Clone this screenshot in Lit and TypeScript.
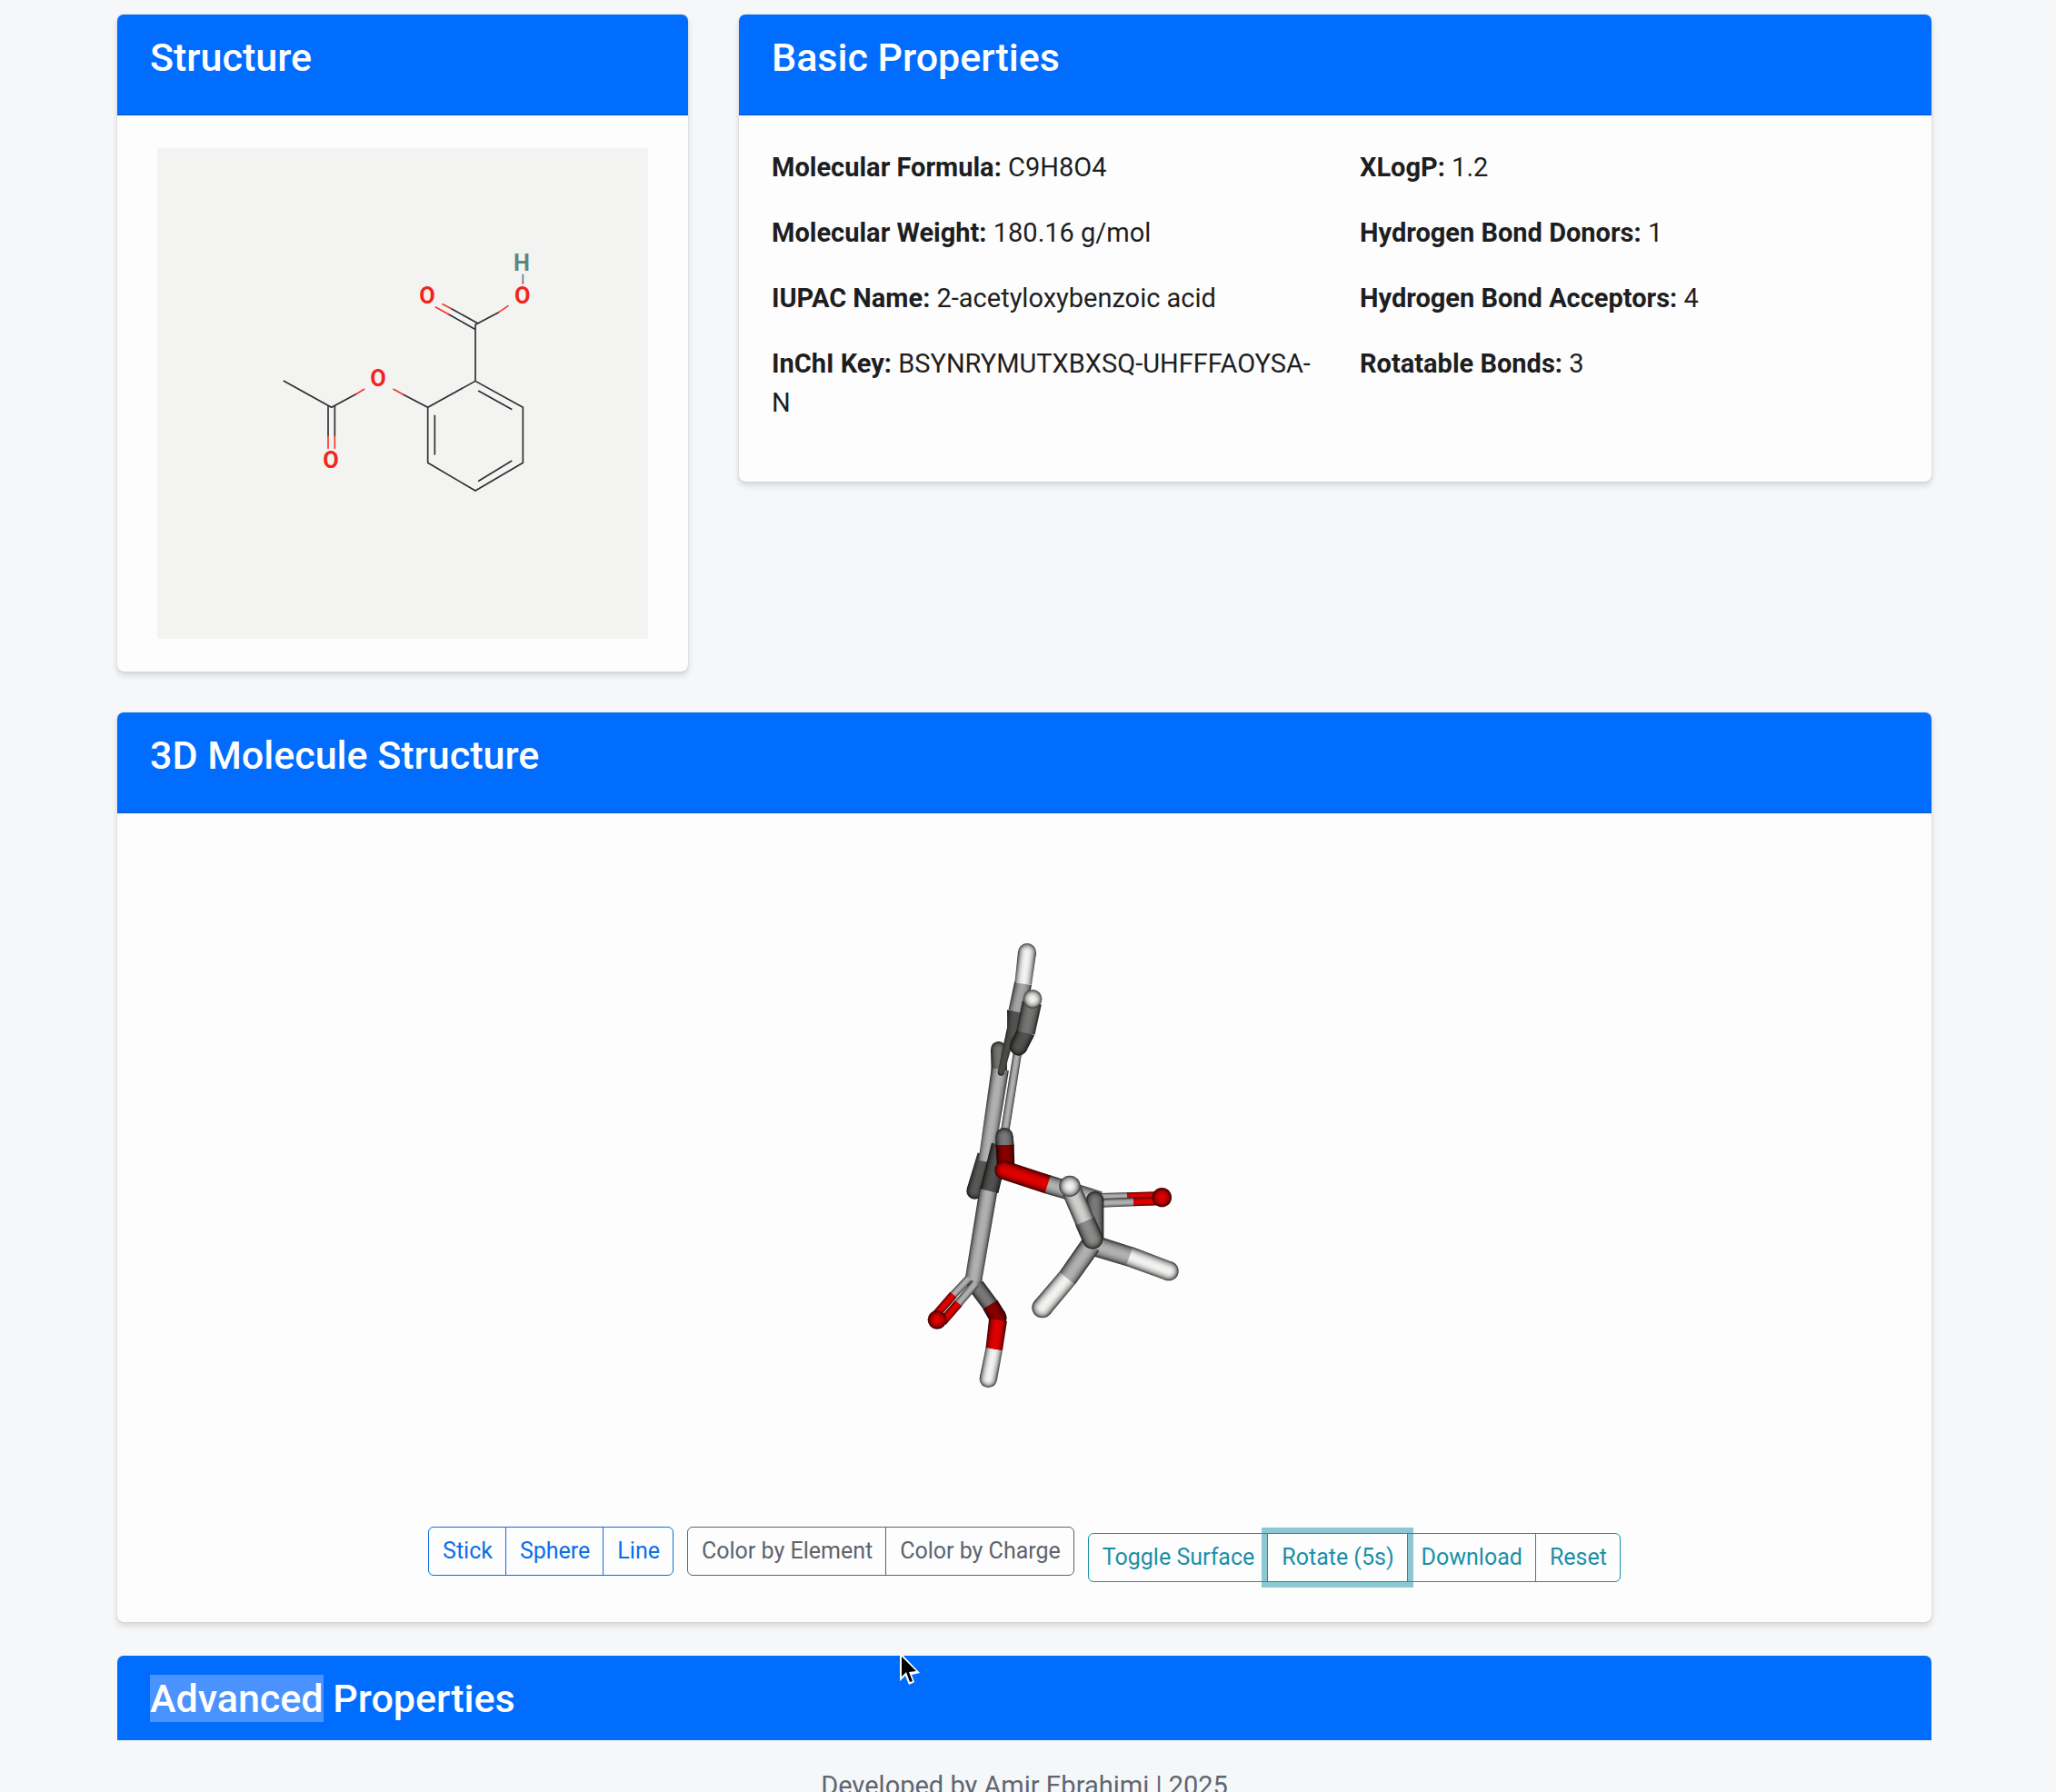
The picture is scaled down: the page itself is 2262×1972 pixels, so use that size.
import { LitElement, html, svg, css } from "lit";
import { customElement } from "lit/decorators.js";

type Rgb = [number, number, number];
type Stick = {
  from: [number, number];
  to: [number, number];
  r1: number;
  r2?: number;
  color: Rgb;
  capStart?: boolean;
  capEnd?: boolean;
};
type Ball = { at: [number, number]; r: number; color: Rgb };

const CARBON: Rgb = [178, 178, 178];
const CARBON_MID: Rgb = [122, 122, 122];
const CARBON_DARK: Rgb = [82, 82, 80];
const HYDROGEN: Rgb = [244, 244, 242];
const OXYGEN: Rgb = [226, 0, 0];
const OXYGEN_DARK: Rgb = [136, 0, 0];

/* Painted back to front. */
const SHAPES: Array<Stick | Ball> = [
  // far side of the ring
  { from: [266, 404], to: [268, 475], r1: 26, color: [116, 116, 114], capStart: true },
  { from: [220, 752], to: [187, 872], r1: 24, r2: 27, color: [88, 88, 86], capEnd: true },
  { from: [271, 470], to: [224, 775], r1: 29, r2: 25, color: CARBON },
  // upper C-H bond
  { from: [312, 325], to: [274, 480], r1: 16, r2: 11, color: [76, 76, 74], capEnd: true },
  { from: [325, 278], to: [314, 365], r1: 31, r2: 20, color: CARBON_DARK },
  { from: [347, 186], to: [325, 280], r1: 29, r2: 27, color: [166, 166, 166] },
  { from: [360, 84], to: [347, 188], r1: 30, r2: 28, color: HYDROGEN, capStart: true },
  // near side of the ring
  { from: [330, 405], to: [286, 680], r1: 14, r2: 14, color: CARBON },
  { from: [357, 345], to: [332, 396], r1: 30, r2: 29, color: CARBON_DARK, capEnd: true },
  { from: [376, 250], to: [355, 350], r1: 32, r2: 31, color: [118, 118, 116] },
  { at: [378, 238], r: 31, color: HYDROGEN },
  // carboxyl group
  { from: [234, 860], to: [183, 1165], r1: 30, r2: 28, color: CARBON, capEnd: true },
  { from: [272, 720], to: [235, 872], r1: 30, r2: 31, color: CARBON_DARK },
  // ring carbon and ester oxygen
  { from: [285, 692], to: [287, 724], r1: 29, r2: 30, color: CARBON_MID, capStart: true },
  { from: [287, 720], to: [290, 800], r1: 30, r2: 29, color: OXYGEN_DARK },
  { from: [192, 1185], to: [242, 1252], r1: 27, r2: 27, color: CARBON_MID },
  { from: [238, 1247], to: [264, 1290], r1: 28, r2: 29, color: OXYGEN_DARK, capEnd: true },
  { from: [264, 1298], to: [251, 1395], r1: 30, r2: 28, color: OXYGEN },
  { from: [251, 1394], to: [232, 1492], r1: 28, r2: 29, color: HYDROGEN, capEnd: true },
  { from: [168, 1160], to: [117, 1214], r1: 13, color: CARBON },
  { from: [117, 1214], to: [56, 1284], r1: 14, color: OXYGEN },
  { from: [190, 1176], to: [134, 1242], r1: 14, color: CARBON },
  { from: [134, 1242], to: [80, 1304], r1: 15, color: OXYGEN },
  { at: [63, 1297], r: 31, color: OXYGEN },
  // acetyl group
  { from: [425, 849], to: [600, 902], r1: 31, r2: 29, color: CARBON },
  { from: [284, 803], to: [428, 850], r1: 31, r2: 31, color: OXYGEN, capStart: true },
  { from: [600, 890], to: [692, 888], r1: 11, color: CARBON },
  { from: [690, 888], to: [800, 884], r1: 11, color: OXYGEN },
  { from: [600, 912], to: [713, 908], r1: 14, color: CARBON },
  { from: [711, 908], to: [800, 905], r1: 14, color: OXYGEN },
  { at: [805, 893], r: 32, color: OXYGEN },
  { from: [584, 902], to: [584, 1045], r1: 29, r2: 29, color: CARBON_MID, capStart: true },
  { from: [580, 1052], to: [700, 1089], r1: 34, r2: 33, color: CARBON },
  { from: [698, 1088], to: [828, 1136], r1: 33, r2: 32, color: HYDROGEN, capEnd: true },
  { from: [570, 1050], to: [491, 1162], r1: 34, r2: 33, color: CARBON },
  { from: [492, 1160], to: [410, 1257], r1: 33, r2: 34, color: HYDROGEN, capEnd: true },
  { from: [550, 970], to: [576, 1030], r1: 34, r2: 34, color: [140, 140, 138], capEnd: true },
  { from: [508, 872], to: [551, 972], r1: 33, r2: 33, color: [208, 208, 206] },
  { at: [501, 856], r: 35, color: HYDROGEN },
];

const shade = (c: Rgb, k: number) => `rgb(${c.map((v) => Math.round(v * k)).join(",")})`;

const LIGHT: Array<[number, number]> = [
  [0, 0.18], [0.07, 0.48], [0.18, 0.76], [0.34, 0.95], [0.5, 1],
  [0.66, 0.95], [0.82, 0.76], [0.93, 0.48], [1, 0.18],
];

const ball = (b: Ball, id: string) => svg`
  <radialGradient id=${id} gradientUnits="userSpaceOnUse" cx=${b.at[0]} cy=${b.at[1]} r=${b.r}>
    ${LIGHT.slice(4).map(([o, k]) => svg`<stop offset=${(o - 0.5) * 2} stop-color=${shade(b.color, k)}></stop>`)}
  </radialGradient>
  <circle cx=${b.at[0]} cy=${b.at[1]} r=${b.r} fill="url(#${id})"></circle>`;

const stick = (s: Stick, id: string) => {
  const [x1, y1] = s.from;
  const [x2, y2] = s.to;
  const r1 = s.r1;
  const r2 = s.r2 ?? s.r1;
  const len = Math.hypot(x2 - x1, y2 - y1);
  const nx = -(y2 - y1) / len;
  const ny = (x2 - x1) / len;
  const r = Math.max(r1, r2);
  const mx = (x1 + x2) / 2;
  const my = (y1 + y2) / 2;
  const points = [
    [x1 + nx * r1, y1 + ny * r1],
    [x2 + nx * r2, y2 + ny * r2],
    [x2 - nx * r2, y2 - ny * r2],
    [x1 - nx * r1, y1 - ny * r1],
  ].map((p) => p.join(",")).join(" ");
  return svg`
    ${s.capStart ? ball({ at: s.from, r: r1, color: s.color }, id + "a") : null}
    ${s.capEnd ? ball({ at: s.to, r: r2, color: s.color }, id + "b") : null}
    <linearGradient id=${id} gradientUnits="userSpaceOnUse"
      x1=${mx + nx * r} y1=${my + ny * r} x2=${mx - nx * r} y2=${my - ny * r}>
      ${LIGHT.map(([o, k]) => svg`<stop offset=${o} stop-color=${shade(s.color, k)}></stop>`)}
    </linearGradient>
    <polygon points=${points} fill="url(#${id})"></polygon>`;
};

@customElement("molecule-viewer")
export class MoleculeViewer extends LitElement {
  static styles = css`
    :host { display: flex; justify-content: center; height: 720px; }
    .model { width: 360px; height: 720px; }
  `;
  render() {
    return html`<svg class="model" viewBox="0 0 1080 2160" role="img" aria-label="3D stick model">
      <g transform="translate(189 267)">
        ${SHAPES.map((s, i) => ("at" in s ? ball(s, "s" + i) : stick(s, "s" + i)))}
      </g>
    </svg>`;
  }
}

@customElement("structure-diagram")
export class StructureDiagram extends LitElement {
  static styles = css`
    :host { display: block; background: #f3f3f1; width: 540px; max-width: 100%; }
    .diagram { display: block; width: 100%; }
    .c { stroke: #2e2e30; }
    .o { stroke: #f2382e; }
    .h { stroke: #5f8585; }
    .bond { fill: none; stroke-width: 5; stroke-linecap: round; }
    .atom { font: 700 76px Roboto, sans-serif; text-anchor: middle; fill: #f2251c; }
    .hydrogen { fill: #5f8585; }
  `;
  render() {
    return html`<svg class="diagram" viewBox="0 0 1620 1620" role="img" aria-label="2D structure">
      <g transform="translate(321 261)">
        <path class="bond c" d="M97 508 254 595 335 551M243 592V690M265 592V690M490 552 572 595 729 508 886 595V778L729 870 572 778V595M595 622V750M740 541 848 601M740 838 848 772M729 508V322L806 281M738 318 650 269M726 336 640 287"></path>
        <path class="bond o" d="M335 551 362 535M243 690V730M265 690V730M490 552 459 535M806 281 837 260M650 269 621 254M640 287 598 264M886 180V186"></path>
        <path class="bond h" d="M886 157V180"></path>
        <text class="atom" x="570" y="251">O</text>
        <text class="atom" x="884" y="251">O</text>
        <text class="atom" x="408" y="526">O</text>
        <text class="atom" x="252" y="796">O</text>
        <text class="atom hydrogen" x="882" y="143">H</text>
      </g>
    </svg>`;
  }
}

const BASIC: Array<Array<[string, string]>> = [
  [
    ["Molecular Formula:", "C9H8O4"],
    ["Molecular Weight:", "180.16 g/mol"],
    ["IUPAC Name:", "2-acetyloxybenzoic acid"],
    ["InChI Key:", "BSYNRYMUTXBXSQ-UHFFFAOYSA-N"],
  ],
  [
    ["XLogP:", "1.2"],
    ["Hydrogen Bond Donors:", "1"],
    ["Hydrogen Bond Acceptors:", "4"],
    ["Rotatable Bonds:", "3"],
  ],
];

const GROUPS = [
  { name: "primary", label: "Style", items: ["Stick", "Sphere", "Line"] },
  { name: "secondary", label: "Color", items: ["Color by Element", "Color by Charge"] },
  { name: "info", label: "Actions", items: ["Toggle Surface", "Rotate (5s)", "Download", "Reset"] },
];

@customElement("app-root")
export class AppRoot extends LitElement {
  static styles = css`
    :host {
      display: block;
      position: relative;
      box-sizing: border-box;
      height: 100vh;
      overflow: hidden;
      padding: 16px 8px 0 0;
      background: #f6f7f9;
      color: #1d1e22;
      font-family: Roboto, "Liberation Sans", sans-serif;
      font-size: 29px;
      line-height: 43px;
    }
    * { box-sizing: border-box; }
    .container { width: calc(100% - 56px); max-width: 1996px; margin: 0 auto; }
    .row { display: grid; grid-template-columns: repeat(3, 1fr); gap: 56px; align-items: start; margin-bottom: 45px; }
    .wide { grid-column: span 2; }
    .card {
      background: #fdfdfd;
      border-radius: 7px;
      box-shadow: 0 0 1px rgba(0, 0, 0, 0.3), 0 4px 7px rgba(0, 0, 0, 0.14);
    }
    .head {
      height: 111px;
      padding: 21px 36px;
      background: #006dff;
      color: #fff;
      border-bottom: 1px solid #0059b8;
      border-radius: 7px 7px 0 0;
    }
    .short { height: 93px; border-bottom: 0; }
    .title { margin: 0; font-size: 43px; line-height: 52px; font-weight: 500; }
    .selected { display: inline-block; background: #4a93ff; }
    .body { padding: 36px; }
    .centered { display: flex; justify-content: center; }
    .props { display: grid; grid-template-columns: 1fr 1fr; gap: 54px; }
    .prop { margin: 0 0 29px; overflow-wrap: break-word; }
    .name { font-weight: 700; }
    .viewer-body { padding-bottom: 44px; }
    .viewer-card { margin-bottom: 37px; }
    .toolbar { display: flex; flex-wrap: wrap; justify-content: center; align-items: flex-start; gap: 15px; margin-top: 29px; }
    .group { display: flex; }
    .btn {
      height: 54px;
      padding: 0 14px 0 15px;
      border: 1px solid currentColor;
      border-radius: 0;
      background: transparent;
      color: inherit;
      font: 400 25px/38px Roboto, "Liberation Sans", sans-serif;
    }
    .btn:first-child { border-radius: 6px 0 0 6px; }
    .btn:last-child { border-radius: 0 6px 6px 0; }
    .btn + .btn { margin-left: -1px; }
    .primary { color: #0a6fe8; }
    .secondary { color: #5d646c; }
    .info { color: #1990a8; margin-top: 7px; }
    .focused { position: relative; box-shadow: 0 0 0 6px rgba(25, 148, 172, 0.5); }
    .foot { padding: 29px 0; text-align: center; color: #5f6670; }
    .foot-text { margin: 0; }
    .cursor { position: absolute; left: 988px; top: 1817px; width: 26px; height: 40px; }
  `;

  render() {
    return html`
      <main class="container">
        <div class="row">
          <section class="card">
            <header class="head"><h2 class="title">Structure</h2></header>
            <div class="body centered"><structure-diagram></structure-diagram></div>
          </section>
          <section class="card wide">
            <header class="head"><h2 class="title">Basic Properties</h2></header>
            <div class="body props">
              ${BASIC.map((col) => html`<div>
                ${col.map(([k, v]) => html`<p class="prop"><strong class="name">${k}</strong> ${v}</p>`)}
              </div>`)}
            </div>
          </section>
        </div>
        <section class="card viewer-card">
          <header class="head"><h2 class="title">3D Molecule Structure</h2></header>
          <div class="body viewer-body">
            <molecule-viewer></molecule-viewer>
            <div class="toolbar">
              ${GROUPS.map((g) => html`<div class="group ${g.name}" role="group" aria-label=${g.label}>
                ${g.items.map((t) => html`<button type="button" class="btn ${t === "Rotate (5s)" ? "focused" : ""}">${t}</button>`)}
              </div>`)}
            </div>
          </div>
        </section>
        <section>
          <header class="head short"><h2 class="title"><span class="selected">Advanced</span> Properties</h2></header>
        </section>
      </main>
      <footer class="foot"><p class="foot-text">Developed by Amir Ebrahimi | 2025</p></footer>
      <svg class="cursor" viewBox="0 0 26 40" aria-hidden="true">
        <path d="M2 1V33L8 27L12 37L18 34L15 26L24 24Z" fill="#fff"></path>
        <path d="M4 6V28L9 23L13 34L16 33L12 23L20 22Z" fill="#000"></path>
      </svg>
    `;
  }
}
